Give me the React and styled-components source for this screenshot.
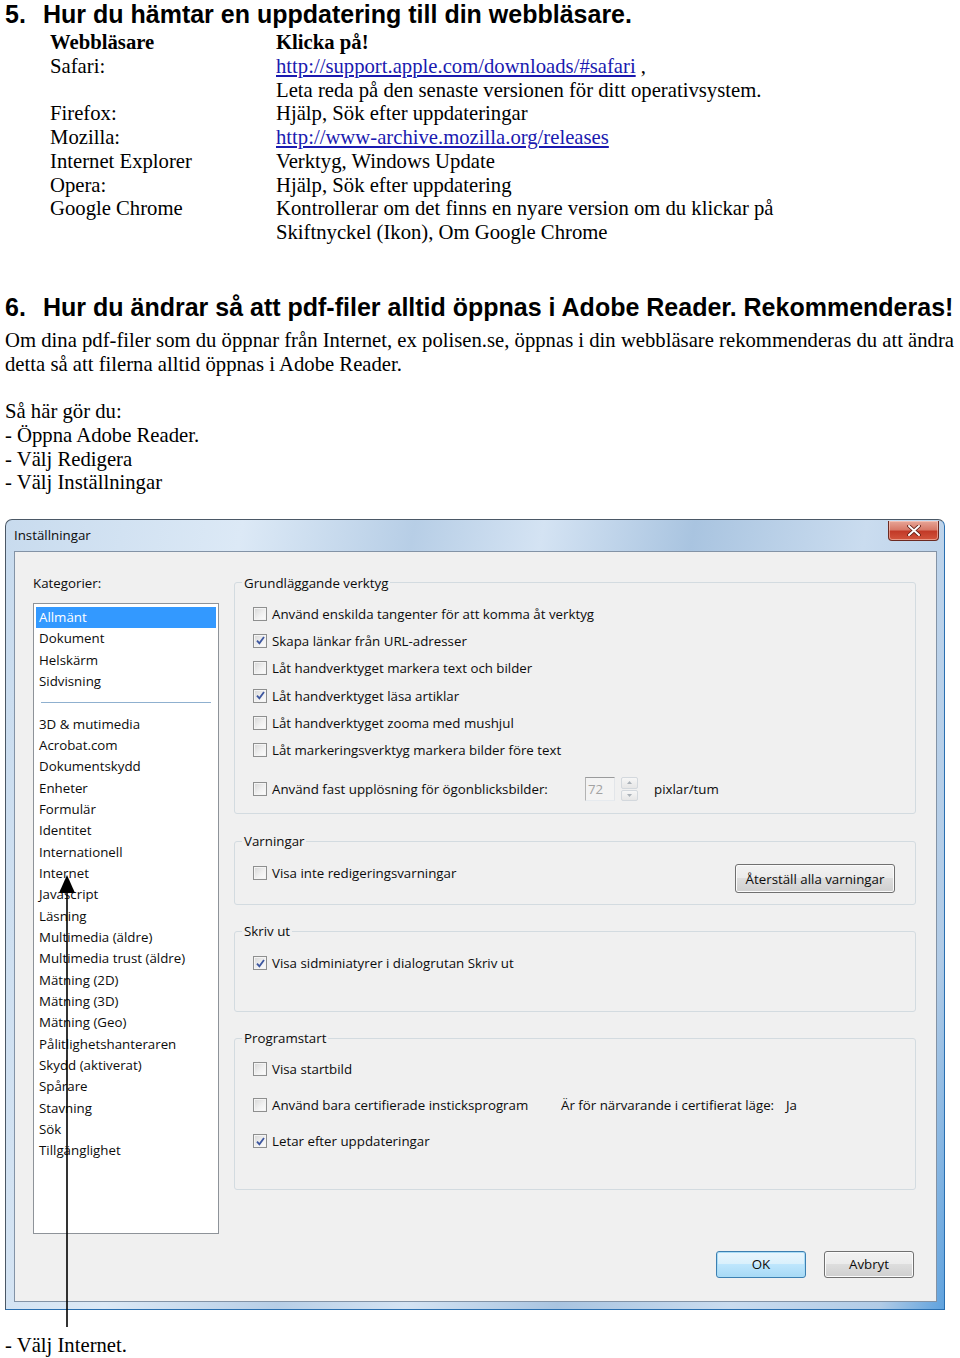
import React from 'react'
import styled, { createGlobalStyle } from 'styled-components'

const ui = `"Open Sans", "Noto Sans", "DejaVu Sans", sans-serif`

const GlobalStyle = createGlobalStyle`
  body {
    margin: 0;
    background: #fff;
  }
  * { box-sizing: border-box; }
`

const browsers = [
  { name: 'Safari:', text: 'http://support.apple.com/downloads/#safari', link: true, suffix: ' ,' },
  { name: '', text: 'Leta reda på den senaste versionen för ditt operativsystem.' },
  { name: 'Firefox:', text: 'Hjälp, Sök efter uppdateringar' },
  { name: 'Mozilla:', text: 'http://www-archive.mozilla.org/releases', link: true },
  { name: 'Internet Explorer', text: 'Verktyg, Windows Update' },
  { name: 'Opera:', text: 'Hjälp, Sök efter uppdatering' },
  { name: 'Google Chrome', text: 'Kontrollerar om det finns en nyare version om du klickar på' },
  { name: '', text: 'Skiftnyckel (Ikon), Om Google Chrome' },
]

const topCategories = ['Allmänt', 'Dokument', 'Helskärm', 'Sidvisning']
const categories = [
  '3D & mutimedia', 'Acrobat.com', 'Dokumentskydd', 'Enheter', 'Formulär', 'Identitet',
  'Internationell', 'Internet', 'Javascript', 'Läsning', 'Multimedia (äldre)',
  'Multimedia trust (äldre)', 'Mätning (2D)', 'Mätning (3D)', 'Mätning (Geo)',
  'Pålitlighetshanteraren', 'Skydd (aktiverat)', 'Spårare', 'Stavning', 'Sök', 'Tillgänglighet',
]

const basicTools = [
  ['Använd enskilda tangenter för att komma åt verktyg', false],
  ['Skapa länkar från URL-adresser', true],
  ['Låt handverktyget markera text och bilder', false],
  ['Låt handverktyget läsa artiklar', true],
  ['Låt handverktyget zooma med mushjul', false],
  ['Låt markeringsverktyg markera bilder före text', false],
]

function Check({ checked, children, w }) {
  return (
    <CheckItem $w={w}>
      <Box>
        {checked && (
          <svg width='9' height='9' viewBox='0 0 9 9'>
            <path d='M1 4.6 L3.4 7.4 L8 1' fill='none' stroke='#3d57a0' strokeWidth='1.8' />
          </svg>
        )}
      </Box>
      {children}
    </CheckItem>
  )
}

function App() {
  return (
    <Page>
      <GlobalStyle />
      <Heading $top={0}><Num>5.</Num>Hur du hämtar en uppdatering till din webbläsare.</Heading>
      <BrowserTable>
        <Cell $bold>Webbläsare</Cell>
        <Cell $bold>Klicka på!</Cell>
        {browsers.map((b, i) => (
          <React.Fragment key={i}>
            <Cell>{b.name}</Cell>
            <Cell>
              {b.link ? <Link href='#'>{b.text}</Link> : b.text}
              {b.suffix}
            </Cell>
          </React.Fragment>
        ))}
      </BrowserTable>

      <Heading $top={48.6}><Num>6.</Num>Hur du ändrar så att pdf-filer alltid öppnas i Adobe Reader. Rekommenderas!</Heading>
      <Text $top={7.65}>
        Om dina pdf-filer som du öppnar från Internet, ex polisen.se, öppnas i din webbläsare rekommenderas du att ändra<br />
        detta så att filerna alltid öppnas i Adobe Reader.
      </Text>
      <Text $top={23.75}>
        Så här gör du:<br />
        - Öppna Adobe Reader.<br />
        - Välj Redigera<br />
        - Välj Inställningar
      </Text>

      <Window>
        <TitleBar>
          <span>Inställningar</span>
          <CloseButton>
            <svg width='14' height='11' viewBox='0 0 14 11'>
              <path d='M2 1 L12 10 M12 1 L2 10' stroke='#5a1a12' strokeWidth='3.6' strokeLinecap='round' />
              <path d='M2 1 L12 10 M12 1 L2 10' stroke='#fff' strokeWidth='2' strokeLinecap='round' />
            </svg>
          </CloseButton>
        </TitleBar>
        <Client>
          <Main>
            <div>
              <Caption>Kategorier:</Caption>
              <CategoryList>
                {topCategories.map((c, i) => (
                  <Item key={c} $selected={i === 0}>{c}</Item>
                ))}
                <Separator />
                {categories.map(c => <Item key={c}>{c}</Item>)}
              </CategoryList>
            </div>

            <div>
              <Group>
                <Legend>Grundläggande verktyg</Legend>
                <GroupBody $pad='8px 0 10px 18px'>
                  {basicTools.map(([label, checked]) => (
                    <Row key={label}><Check checked={checked}>{label}</Check></Row>
                  ))}
                  <Row $h={28} $mt={11.4}>
                    <Check w={332}>Använd fast upplösning för ögonblicksbilder:</Check>
                    <SpinField>72</SpinField>
                    <SpinButtons>
                      <SpinHalf>
                        <svg width='5' height='3' viewBox='0 0 5 3'><path d='M0 3 L2.5 0 L5 3Z' fill='#aab1b8' /></svg>
                      </SpinHalf>
                      <SpinHalf>
                        <svg width='5' height='3' viewBox='0 0 5 3'><path d='M0 0 L2.5 3 L5 0Z' fill='#aab1b8' /></svg>
                      </SpinHalf>
                    </SpinButtons>
                    <Unit>pixlar/tum</Unit>
                  </Row>
                </GroupBody>
              </Group>

              <Group $top={18}>
                <Legend>Varningar</Legend>
                <GroupBody $pad='9.5px 20px 11px 18px'>
                  <Row $h='auto' $start>
                    <Row $h={27}><Check>Visa inte redigeringsvarningar</Check></Row>
                    <Button $w={160} $h={29} $mt={4.5}>Återställ alla varningar</Button>
                  </Row>
                </GroupBody>
              </Group>

              <Group $top={17}>
                <Legend>Skriv ut</Legend>
                <GroupBody $pad='9.5px 0 34.5px 18px'>
                  <Row $h={27}><Check checked>Visa sidminiatyrer i dialogrutan Skriv ut</Check></Row>
                </GroupBody>
              </Group>

              <Group $top={17}>
                <Legend>Programstart</Legend>
                <GroupBody $pad='4px 0 30px 18px'>
                  <Row $h={36}><Check>Visa startbild</Check></Row>
                  <Row $h={36}>
                    <Check w={308}>Använd bara certifierade insticksprogram</Check>
                    <Status>Är för närvarande i certifierat läge:</Status>
                    <span>Ja</span>
                  </Row>
                  <Row $h={36}><Check checked>Letar efter uppdateringar</Check></Row>
                </GroupBody>
              </Group>
            </div>
          </Main>
          <Footer>
            <Button $w={90} $h={27} $primary>OK</Button>
            <Button $w={90} $h={27}>Avbryt</Button>
          </Footer>
        </Client>
      </Window>

      <Text $top={24}>- Välj Internet.</Text>

      <Pointer width='18' height='452' viewBox='0 0 18 452'>
        <path d='M9 0 L1 18 L17 18 Z' fill='#000' />
        <line x1='9' y1='17' x2='9' y2='452' stroke='#000' strokeWidth='1.6' />
      </Pointer>
    </Page>
  )
}

export default App

const Page = styled.div`
  position: relative;
  padding-left: 5px;
  font-family: "Liberation Serif", "Times New Roman", serif;
  color: #000;
`
const Heading = styled.h2`
  display: flex;
  margin: ${p => p.$top}px 0 0;
  font: bold 25px/28px "Liberation Sans", Arial, sans-serif;
  white-space: nowrap;
`
const Num = styled.span`
  width: 38px;
  flex: none;
`
const BrowserTable = styled.div`
  display: grid;
  grid-template-columns: 226px auto;
  margin: 3px 0 0 45px;
  font-size: 20.7px;
  line-height: 23.75px;
`
const Cell = styled.div`
  font-weight: ${p => (p.$bold ? 'bold' : 'normal')};
  white-space: nowrap;
`
const Link = styled.a`
  color: #1a1ab0;
  text-decoration: underline;
`
const Text = styled.p`
  margin: ${p => p.$top}px 0 0;
  font-size: 20.7px;
  line-height: 23.75px;
  white-space: nowrap;
`
const Window = styled.div`
  width: 940px;
  margin-top: 23.75px;
  padding: 0 7px 7px 8px;
  border: 1px solid #4b5866;
  border-right-color: #2a6fb0;
  border-bottom-color: #2a6fb0;
  border-radius: 7px 7px 0 0;
  background: linear-gradient(100deg, #c8dbee 0%, #dce9f6 22%, #b7cee6 38%, #d4e3f3 50%, #a9c4e0 64%, #cadcef 80%, #b1cbe6 94%, #5fa2de 100%);
  font-family: ${ui};
  font-size: 13.3px;
  color: #0c0c0c;
`
const TitleBar = styled.div`
  display: flex;
  justify-content: space-between;
  height: 31px;
  line-height: 31px;
`
const CloseButton = styled.div`
  display: flex;
  align-items: center;
  justify-content: center;
  width: 51px;
  height: 20px;
  margin: 1px -2px 0 0;
  border: 1px solid #6b2a22;
  border-top: none;
  border-radius: 0 0 4px 4px;
  background: linear-gradient(#e7a698 0%, #d87a69 45%, #c23a28 55%, #d2553d 100%);
  box-shadow: inset 0 0 0 1px rgba(255, 220, 210, 0.5);
`
const Client = styled.div`
  height: 751px;
  border: 1px solid #8393a6;
  background: #f0f0f0;
  padding: 22px 20px 23px 18px;
  display: flex;
  flex-direction: column;
`
const Main = styled.div`
  display: grid;
  grid-template-columns: 186px 682px;
  column-gap: 15px;
  align-items: start;
`
const Caption = styled.div`
  line-height: 18px;
`
const CategoryList = styled.div`
  height: 631px;
  margin-top: 11px;
  padding: 3px 2px;
  border: 1px solid #8e9399;
  background: #fff;
`
const Item = styled.div`
  height: 21.35px;
  line-height: 21px;
  padding-left: 3px;
  background: ${p => (p.$selected ? '#3399ff' : 'transparent')};
  color: ${p => (p.$selected ? '#fff' : 'inherit')};
  white-space: nowrap;
`
const Separator = styled.div`
  height: 21.2px;
  margin: 0 5px;
  background: linear-gradient(transparent 10px, #8fb0cf 10px, #8fb0cf 11px, transparent 11px);
`
const Group = styled.fieldset`
  margin: ${p => p.$top || 0}px 0 0;
  padding: 0;
  min-width: 0;
  border: 1px solid #d3dbe0;
  border-radius: 3px;
`
const Legend = styled.legend`
  margin-left: 7px;
  padding: 0 2px;
  line-height: 18px;
`
const GroupBody = styled.div`
  padding: ${p => p.$pad};
`
const Row = styled.div`
  display: flex;
  align-items: ${p => (p.$start ? 'flex-start' : 'center')};
  justify-content: ${p => (p.$start ? 'space-between' : 'flex-start')};
  height: ${p => (p.$h === 'auto' ? 'auto' : `${p.$h || 27.3}px`)};
  margin-top: ${p => p.$mt || 0}px;
  white-space: nowrap;
`
const CheckItem = styled.label`
  display: flex;
  align-items: center;
  gap: 5px;
  flex: none;
  width: ${p => (p.$w ? `${p.$w}px` : 'auto')};
`
const Box = styled.span`
  display: flex;
  align-items: center;
  justify-content: center;
  width: 14px;
  height: 14px;
  border: 1px solid #8e8f8f;
  background: linear-gradient(135deg, #d6d6d6 0%, #f0f0f0 55%, #fdfdfd 100%);
  box-shadow: inset 0 0 0 1px #f4f4f4;
`
const SpinField = styled.div`
  display: flex;
  align-items: center;
  width: 30px;
  height: 24px;
  padding-left: 2px;
  border: 1px solid;
  border-color: #9a9b9c #e2e5e9 #e6eaee #b3b3b3;
  background: #f3f3f3;
  color: #a2a2a2;
`
const SpinButtons = styled.div`
  display: flex;
  flex-direction: column;
  width: 17px;
  height: 24px;
  margin-left: 6px;
  gap: 1px;
`
const SpinHalf = styled.div`
  flex: 1;
  display: flex;
  align-items: center;
  justify-content: center;
  border: 1px solid #d3d8dd;
  border-radius: 2px;
  background: linear-gradient(#f6f6f6, #e6e6e6);
`
const Unit = styled.span`
  margin-left: 16px;
`
const Status = styled.span`
  width: 225px;
  flex: none;
`
const Button = styled.button`
  width: ${p => p.$w}px;
  height: ${p => p.$h}px;
  margin-top: ${p => p.$mt || 0}px;
  padding: 0;
  font-family: ${ui};
  font-size: 13.3px;
  color: #0c0c0c;
  border: 1px solid ${p => (p.$primary ? '#3c7fb1' : '#707070')};
  border-radius: 3px;
  background: ${p => (p.$primary
    ? 'linear-gradient(#eaf6fd 0%, #d9f0fc 49%, #bee6fd 50%, #a7d9f5 100%)'
    : 'linear-gradient(#f2f2f2 0%, #ebebeb 49%, #dddddd 50%, #cfcfcf 100%)')};
  box-shadow: inset 0 0 0 1px ${p => (p.$primary ? '#a9dcf6' : '#fbfbfb')};
`
const Footer = styled.div`
  display: flex;
  justify-content: flex-end;
  gap: 18px;
  margin-top: 17px;
  padding-right: 2px;
`
const Pointer = styled.svg`
  position: absolute;
  left: 58px;
  top: 875px;
`
